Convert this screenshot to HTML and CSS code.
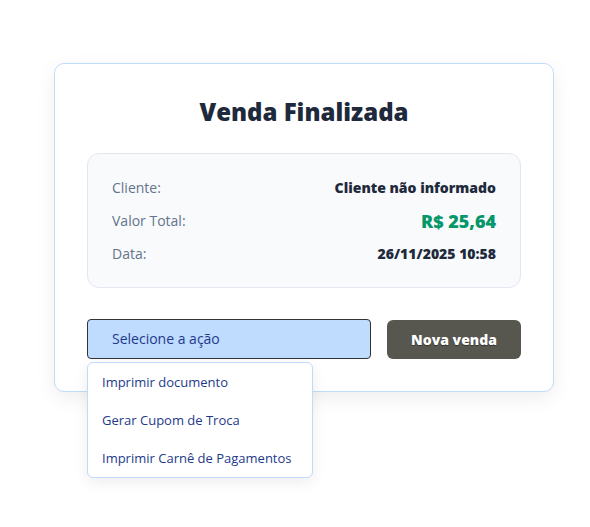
FILE: index.html
```html
<!DOCTYPE html>
<html lang="pt-BR">
<head>
<meta charset="UTF-8" />
<meta name="viewport" content="width=device-width, initial-scale=1" />
<title>Venda Finalizada</title>
<link rel="stylesheet" href="styles.css">
</head>
<body>
  <div class="card">
    <h1>Venda Finalizada</h1>

    <div class="resumo">
      <div class="linha">
        <span class="rotulo">Cliente:</span>
        <span class="valor">Cliente não informado</span>
      </div>
      <div class="linha">
        <span class="rotulo">Valor Total:</span>
        <span class="valor total">R$ 25,64</span>
      </div>
      <div class="linha">
        <span class="rotulo">Data:</span>
        <span class="valor">26/11/2025 10:58</span>
      </div>
    </div>

    <div class="acoes">
      <div class="select-wrap">
        <div class="select">Selecione a ação</div>
        <ul class="menu">
          <li>Imprimir documento</li>
          <li>Gerar Cupom de Troca</li>
          <li>Imprimir Carnê de Pagamentos</li>
        </ul>
      </div>
      <button class="btn-nova">Nova venda</button>
    </div>
  </div>
</body>
</html>
```

FILE: styles.css
```css
html, body {
  min-height: 100%;
}
body {
  font-family: 'Open Sans', 'Noto Sans', sans-serif;
  background: #ffffff;
  margin: 0;
  padding: 63px 0 0 54px;
  min-height: 527px;
  box-sizing: border-box;
  color: #1e293b;
}
.card {
  width: 500px;
  box-sizing: border-box;
  background: #fff;
  border: 1px solid #bfdbfe;
  border-radius: 10px;
  box-shadow: 0 6px 20px rgba(0, 0, 0, 0.07);
  padding: 26px 32px 32px;
}
h1 {
  text-align: center;
  font-size: 24px;
  font-weight: 800;
  color: #1e293b;
  margin: 0 0 19px;
  line-height: 44px;
}
.resumo {
  background: #f8fafc;
  border: 1px solid #e2e8f0;
  border-radius: 12px;
  padding: 17px 24px;
}
.linha {
  display: flex;
  justify-content: space-between;
  align-items: center;
  height: 33px;
  font-size: 14px;
}
.rotulo {
  color: #64748b;
}
.valor {
  font-weight: 800;
  color: #1e293b;
}
.valor.total {
  font-size: 18px;
  color: #059669;
}
.acoes {
  display: flex;
  gap: 16px;
  margin-top: 31px;
}
.select-wrap {
  position: relative;
  flex: 1;
}
.select {
  height: 40px;
  box-sizing: border-box;
  background: #bfdbfe;
  border: 1px solid #333;
  border-radius: 4px;
  padding: 0 24px;
  font-size: 14px;
  line-height: 38px;
  color: #1e3a8a;
}
.menu {
  position: absolute;
  top: 43px;
  left: 0;
  width: 226px;
  box-sizing: border-box;
  margin: 0;
  padding: 0;
  list-style: none;
  background: #fff;
  border: 1px solid #bfdbfe;
  border-radius: 6px;
  box-shadow: 0 4px 14px rgba(0, 0, 0, 0.08);
  z-index: 2;
}
.menu li {
  height: 38px;
  line-height: 38px;
  padding: 0 14px;
  font-size: 13px;
  color: #1e3a8a;
}
.btn-nova {
  width: 134px;
  height: 39px;
  margin-top: 1px;
  border: none;
  border-radius: 6px;
  background: #57564f;
  color: #fff;
  font-family: inherit;
  font-size: 14px;
  font-weight: 800;
  text-shadow: 0 1px 1px rgba(0, 0, 0, 0.4);
  cursor: pointer;
}
```
